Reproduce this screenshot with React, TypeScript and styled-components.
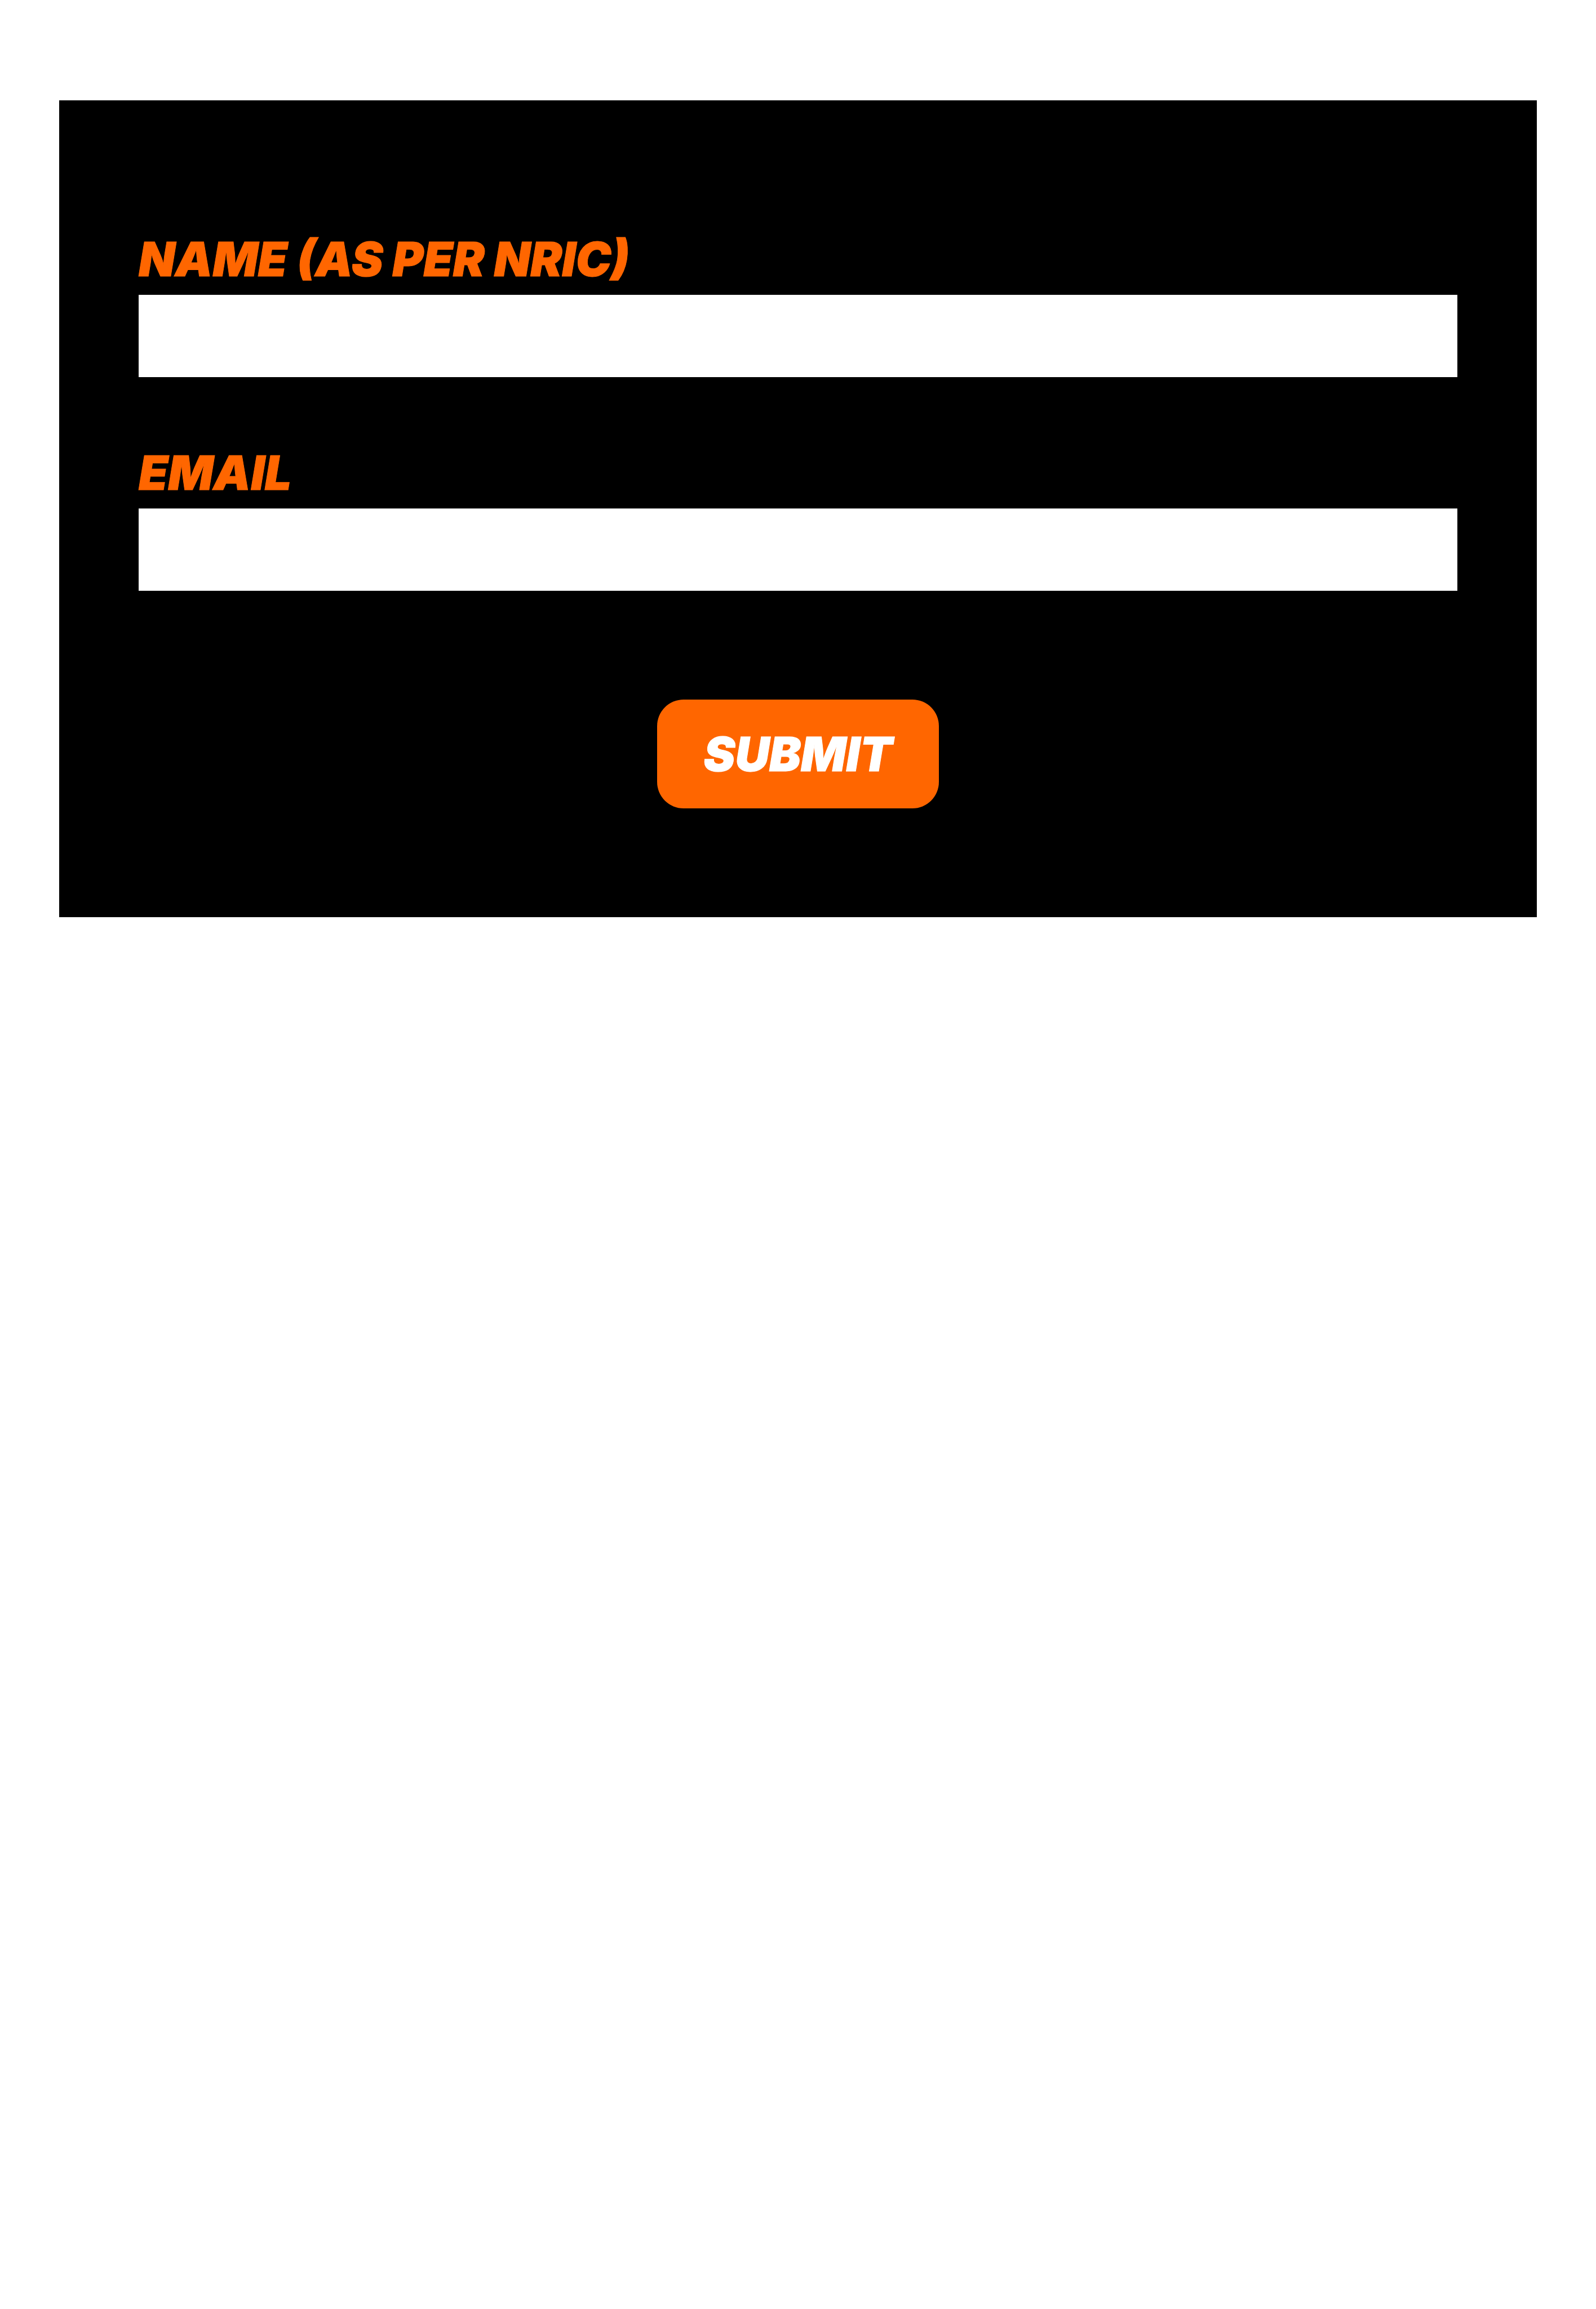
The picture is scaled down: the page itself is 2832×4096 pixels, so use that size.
import React from "react";
import styled, { createGlobalStyle, css } from "styled-components";

const GlobalStyle = createGlobalStyle`
  *, *::before, *::after { box-sizing: border-box; }
  body {
    margin: 0;
    background: #fff;
    font-family: Inter, "Liberation Sans", sans-serif;
  }
`;

const displayText = css`
  font-family: inherit;
  font-size: 84px;
  font-style: italic;
  font-weight: 900;
  line-height: 96px;
  text-transform: uppercase;
  -webkit-text-stroke: 1px currentColor;
`;

const Page = styled.main`
  padding: 178px 105px;
`;

const Form = styled.form`
  display: flex;
  flex-direction: column;
  gap: 122px;
  padding: 234px 141px 193px;
  background: #000;
`;

const Field = styled.div`
  display: flex;
  flex-direction: column;
  gap: 15px;
`;

const Label = styled.label`
  ${displayText}
  color: #ff6600;
`;

const TextBox = styled.input`
  width: 100%;
  height: 146px;
  padding: 0 40px;
  border: 0;
  border-radius: 0;
  background: #fff;
  color: #000;
  font: inherit;
  font-size: 64px;
`;

const Actions = styled.div`
  display: flex;
  justify-content: center;
  padding-top: 71px;
`;

const SubmitButton = styled.button`
  ${displayText}
  min-width: 500px;
  height: 193px;
  padding: 0 64px;
  border: 0;
  border-radius: 47px;
  background: #ff6600;
  color: #fff;
  cursor: pointer;
`;

const fields = [
  { id: "name", label: "Name (as per NRIC)", type: "text" },
  { id: "email", label: "Email", type: "email" },
];

export default function App() {
  return (
    <>
      <GlobalStyle />
      <Page>
        <Form onSubmit={(event: React.FormEvent) => event.preventDefault()}>
          {fields.map((field) => (
            <Field key={field.id}>
              <Label htmlFor={field.id}>{field.label}</Label>
              <TextBox id={field.id} name={field.id} type={field.type} />
            </Field>
          ))}
          <Actions>
            <SubmitButton type="submit">Submit</SubmitButton>
          </Actions>
        </Form>
      </Page>
    </>
  );
}
